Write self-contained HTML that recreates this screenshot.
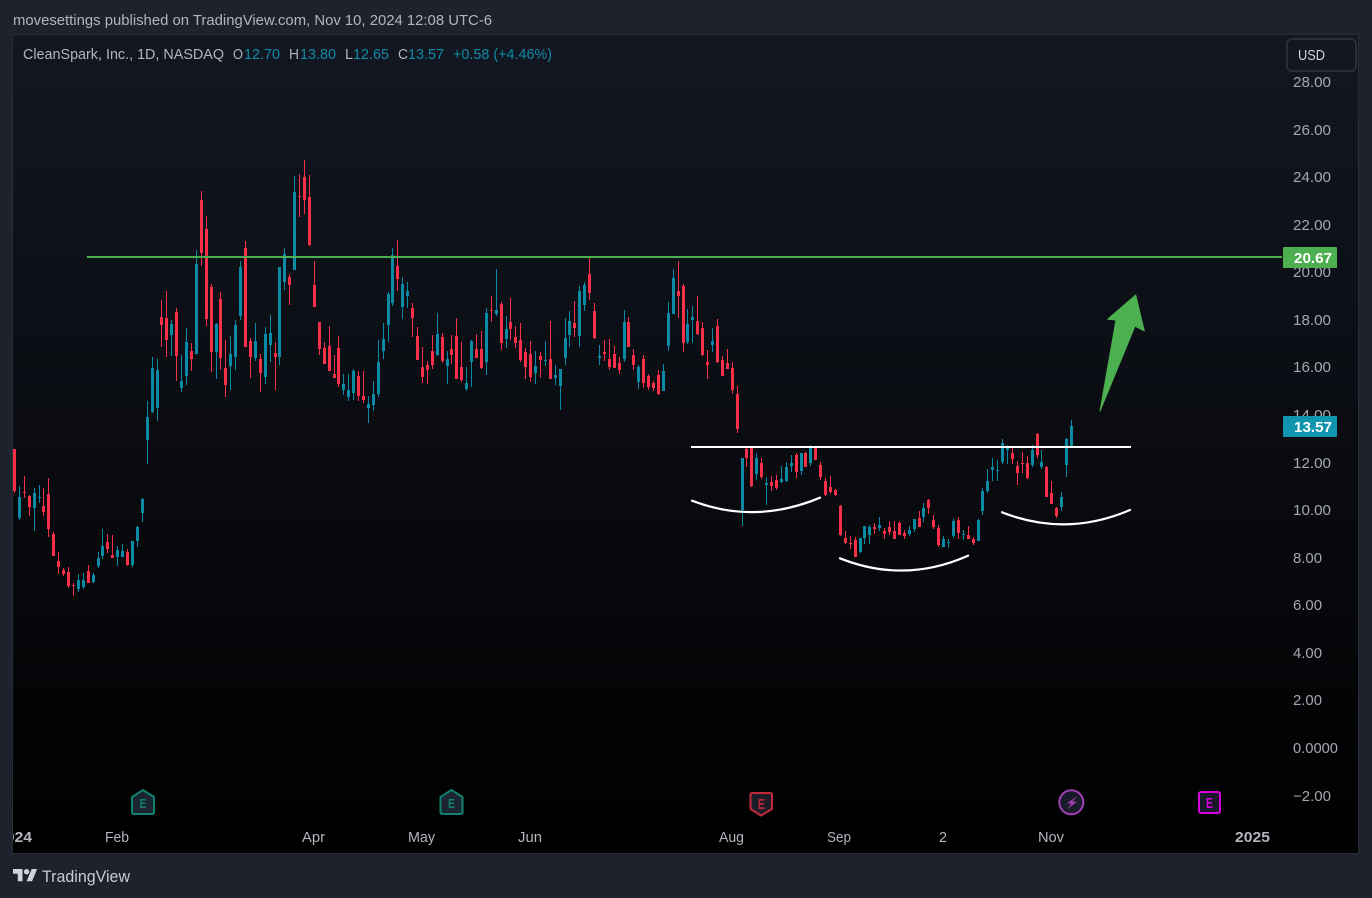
<!DOCTYPE html>
<html><head><meta charset="utf-8"><style>
html,body{margin:0;padding:0;width:1372px;height:898px;overflow:hidden;background:#1e222d}
svg{display:block}
text{font-family:"Liberation Sans",sans-serif;font-size:15px}
.y{fill:#a5a8b0}
.x{fill:#b2b5be}
.l{fill:#b2b5be}
.v{fill:#0f8ba6}
</style></head><body>
<svg width="1372" height="898" viewBox="0 0 1372 898" xmlns="http://www.w3.org/2000/svg">
<defs>
<linearGradient id="g" x1="0" y1="0" x2="0" y2="1"><stop offset="0" stop-color="#131722"/><stop offset="1" stop-color="#000"/></linearGradient>
<clipPath id="c"><rect x="13" y="35" width="1345" height="818"/></clipPath>
</defs>
<rect width="1372" height="898" fill="#1e222d"/>
<rect x="12.5" y="34.5" width="1346" height="819" fill="url(#g)" stroke="#2a2e39"/>
<text x="13" y="25" class="l" textLength="479" lengthAdjust="spacingAndGlyphs">movesettings published on TradingView.com, Nov 10, 2024 12:08 UTC-6</text>
<text x="23" y="59" class="l" textLength="201" lengthAdjust="spacingAndGlyphs">CleanSpark, Inc., 1D, NASDAQ</text>
<text x="233" y="59" class="l" textLength="10" lengthAdjust="spacingAndGlyphs">O</text><text x="244" y="59" class="v" textLength="36" lengthAdjust="spacingAndGlyphs">12.70</text>
<text x="289" y="59" class="l" textLength="10" lengthAdjust="spacingAndGlyphs">H</text><text x="300" y="59" class="v" textLength="36" lengthAdjust="spacingAndGlyphs">13.80</text>
<text x="345" y="59" class="l" textLength="8" lengthAdjust="spacingAndGlyphs">L</text><text x="353" y="59" class="v" textLength="36" lengthAdjust="spacingAndGlyphs">12.65</text>
<text x="398" y="59" class="l" textLength="10" lengthAdjust="spacingAndGlyphs">C</text><text x="408" y="59" class="v" textLength="36" lengthAdjust="spacingAndGlyphs">13.57</text>
<text x="453" y="59" class="v" textLength="99" lengthAdjust="spacingAndGlyphs">+0.58 (+4.46%)</text>

<g clip-path="url(#c)" fill="none">
<path stroke="#f7304a" stroke-width="1" d="M14.5 449V493M24.5 476V498M29.5 495V516M43.5 488V516M48.5 478V537M53.5 532V556M58.5 552V574M63.5 568V576M68.5 567V588M73.5 583V596M88.5 565V583M107.5 534V553M112.5 535V558M127.5 549V566M161.5 300V347M166.5 291V357M176.5 308V381M191.5 343V371M201.5 191V266M206.5 216V326M211.5 284V372M220.5 292V370M225.5 340V397M245.5 241V347M250.5 338V378M260.5 354V392M275.5 342V390M289.5 274V305M299.5 174V217M304.5 160V214M309.5 175V246M314.5 261V307M319.5 322V355M324.5 342V364M329.5 326V371M334.5 355V378M338.5 336V387M358.5 371V401M363.5 371V403M397.5 240V291M412.5 303V337M417.5 327V360M422.5 347V383M427.5 361V384M432.5 335V369M442.5 333V363M451.5 335V364M456.5 318V379M461.5 342V382M476.5 334V358M481.5 331V369M491.5 296V322M501.5 302V350M510.5 298V340M515.5 326V348M520.5 323V362M525.5 348V379M530.5 341V382M540.5 352V378M550.5 321V379M574.5 301V337M589.5 257V300M594.5 303V339M604.5 340V361M609.5 339V370M614.5 346V368M619.5 357V374M628.5 317V347M633.5 349V370M643.5 355V388M648.5 374V390M653.5 381V391M658.5 370V395M678.5 261V318M683.5 284V352M697.5 296V335M702.5 322V356M707.5 350V379M717.5 319V363M722.5 356V376M727.5 349V369M732.5 362V394M737.5 386V433M746.5 446V467M751.5 446V487M761.5 458V479M771.5 476V491M776.5 475V490M796.5 453V478M805.5 452V467M815.5 447V460M820.5 462V480M825.5 478V496M830.5 476V494M835.5 489V496M840.5 505V536M845.5 531V544M850.5 536V549M855.5 537V557M874.5 523V534M884.5 528V539M889.5 521V535M894.5 521V539M899.5 521V535M904.5 530V539M919.5 511V527M928.5 499V514M933.5 515V529M938.5 525V547M958.5 517V539M968.5 526V539M973.5 537V545M1012.5 448V464M1017.5 461V485M1022.5 452V473M1027.5 456V479M1037.5 433V458M1046.5 466V497M1051.5 481V504M1056.5 507V518"/>
<path stroke="#f7304a" stroke-width="3" d="M14.5 449V491M24.5 492V493M29.5 496V507M43.5 506V512M48.5 494V529M53.5 534V556M58.5 561V567M63.5 570V574M68.5 572V586M73.5 585V586M88.5 571V583M107.5 542V549M112.5 555V558M127.5 552V565M161.5 317V325M166.5 318V340M176.5 312V356M191.5 351V359M201.5 200V253M206.5 229V319M211.5 287V352M220.5 299V358M225.5 368V385M245.5 248V347M250.5 341V357M260.5 359V373M275.5 353V357M289.5 277V285M299.5 196V197M304.5 177V200M309.5 197V245M314.5 285V307M319.5 322V349M324.5 348V364M329.5 346V371M334.5 374V378M338.5 348V384M358.5 376V396M363.5 396V400M397.5 266V279M412.5 308V318M417.5 336V360M422.5 367V377M427.5 365V370M432.5 351V365M442.5 337V361M451.5 349V355M456.5 336V379M461.5 367V380M476.5 349V358M481.5 349V368M491.5 310V311M501.5 304V343M510.5 322V329M515.5 337V343M520.5 340V360M525.5 352V367M530.5 354V377M540.5 356V360M550.5 359V379M574.5 323V328M589.5 274V293M594.5 311V338M604.5 352V354M609.5 359V367M614.5 354V368M619.5 363V370M628.5 322V347M633.5 355V365M643.5 359V383M648.5 376V387M653.5 383V388M658.5 375V394M678.5 291V296M683.5 286V343M697.5 321V334M702.5 328V355M707.5 362V365M717.5 326V362M722.5 360V376M727.5 363V369M732.5 368V390M737.5 394V429M746.5 449V458M751.5 448V486M761.5 463V477M771.5 482V486M776.5 480V488M796.5 455V472M805.5 453V467M815.5 448V460M820.5 465V477M825.5 481V495M830.5 487V492M835.5 490V495M840.5 506V535M845.5 538V543M850.5 543V544M855.5 540V557M874.5 527V529M884.5 531V534M889.5 527V532M894.5 531V539M899.5 523V535M904.5 533V536M919.5 518V527M928.5 500V508M933.5 520V527M938.5 528V545M958.5 520V533M968.5 535V539M973.5 539V543M1012.5 453V459M1017.5 466V473M1022.5 463V464M1027.5 463V478M1037.5 434V455M1046.5 467V497M1051.5 493V504M1056.5 508V516"/>
<path stroke="#0b8aa6" stroke-width="1" d="M19.5 486V520M34.5 488V531M39.5 485V503M78.5 574V592M83.5 573V589M93.5 573V583M98.5 552V568M102.5 529V559M117.5 546V566M122.5 544V557M132.5 541V567M137.5 526V547M142.5 498V522M147.5 401V464M152.5 357V413M157.5 359V421M171.5 320V356M181.5 355V392M186.5 328V385M196.5 250V354M216.5 323V379M230.5 336V390M235.5 320V370M240.5 261V320M255.5 323V361M265.5 327V384M270.5 315V362M279.5 267V365M284.5 248V290M294.5 176V270M343.5 374V395M348.5 374V401M353.5 369V400M368.5 396V423M373.5 381V411M378.5 340V397M383.5 323V359M388.5 292V342M392.5 248V306M402.5 277V319M407.5 282V308M437.5 313V356M447.5 351V384M466.5 367V391M471.5 340V387M486.5 308V375M496.5 269V316M506.5 316V348M535.5 351V384M545.5 341V366M555.5 365V385M560.5 369V410M565.5 318V365M569.5 311V347M579.5 286V347M584.5 282V311M599.5 345V365M624.5 310V362M638.5 365V389M663.5 364V391M668.5 302V351M673.5 269V314M687.5 309V344M692.5 306V343M712.5 328V352M742.5 458V526M756.5 453V480M766.5 477V505M781.5 466V483M786.5 462V482M791.5 455V472M801.5 453V475M810.5 445V466M860.5 538V553M864.5 526V544M869.5 525V544M879.5 517V531M909.5 526V536M914.5 519V532M923.5 503V522M943.5 536V547M948.5 539V548M953.5 519V538M963.5 530V540M978.5 519V541M982.5 488V515M987.5 469V493M992.5 458V481M997.5 460V481M1002.5 439V464M1007.5 445V464M1032.5 445V467M1041.5 450V469M1061.5 492V511M1066.5 438V477M1071.5 420V448"/>
<path stroke="#0b8aa6" stroke-width="3" d="M19.5 497V518M34.5 493V508M39.5 497V498M78.5 580V589M83.5 580V587M93.5 575V582M98.5 558V566M102.5 546V556M117.5 550V557M122.5 551V557M132.5 541V565M137.5 527V541M142.5 499V513M147.5 417V440M152.5 368V412M157.5 370V408M171.5 324V335M181.5 381V388M186.5 342V376M196.5 264V354M216.5 324V352M230.5 354V366M235.5 325V357M240.5 267V316M255.5 341V358M265.5 334V377M270.5 333V345M279.5 267V357M284.5 254V282M294.5 192V270M343.5 384V390M348.5 390V397M353.5 371V393M368.5 404V408M373.5 394V405M378.5 362V394M383.5 339V351M388.5 294V325M392.5 255V303M402.5 284V307M407.5 291V296M437.5 334V355M447.5 359V366M466.5 383V389M471.5 341V362M486.5 313V362M496.5 310V314M506.5 329V339M535.5 366V373M545.5 360V361M555.5 375V378M560.5 369V386M565.5 338V358M569.5 321V335M579.5 291V336M584.5 285V305M599.5 356V358M624.5 322V359M638.5 367V382M663.5 371V391M668.5 313V346M673.5 278V314M687.5 324V342M692.5 317V320M712.5 341V345M742.5 458V510M756.5 458V474M766.5 483V485M781.5 479V482M786.5 467V481M791.5 463V466M801.5 453V471M810.5 448V463M860.5 538V552M864.5 526V538M869.5 527V535M879.5 525V528M909.5 530V534M914.5 519V529M923.5 508V517M943.5 539V547M948.5 542V543M953.5 521V536M963.5 534V535M978.5 520V541M982.5 491V511M987.5 481V491M992.5 467V470M997.5 470V471M1002.5 443V462M1007.5 447V450M1032.5 450V465M1041.5 462V467M1061.5 497V507M1066.5 439V465M1071.5 426V447"/>
</g>

<rect x="87" y="256" width="1195" height="2" fill="#4caf50"/>
<rect x="691" y="446" width="440" height="2" fill="#fff"/>
<g fill="none" stroke="#fff" stroke-width="2.2" stroke-linecap="round">
<path d="M692 500.7Q755 525 820 497.7"/>
<path d="M840 558.3Q904 584 968 555.7"/>
<path d="M1002 512.3Q1066 537.5 1130 510"/>
</g>
<polygon points="1135.7,295 1144.3,331 1135,326 1100,411 1116,320 1107.7,319.3" fill="#4caf50" stroke="#4caf50" stroke-width="1" stroke-linejoin="round"/>

<rect x="1287" y="39" width="69" height="32" rx="5" fill="#131722" stroke="#2a2e39" stroke-width="2"/>
<text x="1298" y="60" fill="#d1d4dc" textLength="27" lengthAdjust="spacingAndGlyphs">USD</text>

<g class="y">
<text x="1293" y="87" textLength="38" lengthAdjust="spacingAndGlyphs">28.00</text>
<text x="1293" y="135" textLength="38" lengthAdjust="spacingAndGlyphs">26.00</text>
<text x="1293" y="182" textLength="38" lengthAdjust="spacingAndGlyphs">24.00</text>
<text x="1293" y="230" textLength="38" lengthAdjust="spacingAndGlyphs">22.00</text>
<text x="1293" y="277" textLength="38" lengthAdjust="spacingAndGlyphs">20.00</text>
<text x="1293" y="325" textLength="38" lengthAdjust="spacingAndGlyphs">18.00</text>
<text x="1293" y="372" textLength="38" lengthAdjust="spacingAndGlyphs">16.00</text>
<text x="1293" y="420" textLength="38" lengthAdjust="spacingAndGlyphs">14.00</text>
<text x="1293" y="468" textLength="38" lengthAdjust="spacingAndGlyphs">12.00</text>
<text x="1293" y="515" textLength="38" lengthAdjust="spacingAndGlyphs">10.00</text>
<text x="1293" y="563" textLength="29" lengthAdjust="spacingAndGlyphs">8.00</text>
<text x="1293" y="610" textLength="29" lengthAdjust="spacingAndGlyphs">6.00</text>
<text x="1293" y="658" textLength="29" lengthAdjust="spacingAndGlyphs">4.00</text>
<text x="1293" y="705" textLength="29" lengthAdjust="spacingAndGlyphs">2.00</text>
<text x="1293" y="753" textLength="45" lengthAdjust="spacingAndGlyphs">0.0000</text>
<text x="1293" y="801" textLength="38" lengthAdjust="spacingAndGlyphs">−2.00</text>
</g>

<rect x="1283" y="247" width="54" height="21" rx="1" fill="#4caf50"/>
<text x="1294" y="263" fill="#fff" font-weight="bold" textLength="38" lengthAdjust="spacingAndGlyphs">20.67</text>
<rect x="1283" y="416" width="54" height="21" rx="1" fill="#0f95ad"/>
<text x="1294" y="432" fill="#fff" font-weight="bold" textLength="38" lengthAdjust="spacingAndGlyphs">13.57</text>

<g class="x">
<g clip-path="url(#c)"><text x="-3" y="842" font-weight="bold" textLength="35" lengthAdjust="spacingAndGlyphs">2024</text></g>
<text x="105" y="842" textLength="24" lengthAdjust="spacingAndGlyphs">Feb</text>
<text x="302" y="842" textLength="23" lengthAdjust="spacingAndGlyphs">Apr</text>
<text x="408" y="842" textLength="27" lengthAdjust="spacingAndGlyphs">May</text>
<text x="518" y="842" textLength="24" lengthAdjust="spacingAndGlyphs">Jun</text>
<text x="719" y="842" textLength="25" lengthAdjust="spacingAndGlyphs">Aug</text>
<text x="827" y="842" textLength="24" lengthAdjust="spacingAndGlyphs">Sep</text>
<text x="939" y="842" textLength="8" lengthAdjust="spacingAndGlyphs">2</text>
<text x="1038" y="842" textLength="26" lengthAdjust="spacingAndGlyphs">Nov</text>
<text x="1235" y="842" font-weight="bold" textLength="35" lengthAdjust="spacingAndGlyphs">2025</text>
</g>

<g stroke-width="2" stroke-linejoin="round">
<path d="M143 790L154 797V812Q154 814 152 814H134Q132 814 132 812V797Z" fill="#1b2430" stroke="#10806f"/>
<path d="M451.500 790L462.500 797V812Q462.500 814 460.500 814H442.500Q440.500 814 440.500 812V797Z" fill="#1b2430" stroke="#10806f"/>
<path d="M752 793H770.500Q772 793 772 795V809L761 815.500L750.500 809V795Q750.500 793 752 793Z" fill="#1c1b28" stroke="#c22a3c"/>
<circle cx="1071.300" cy="802.300" r="12" fill="#1a1b2a" stroke="#a040b5"/>
<rect x="1199" y="792" width="21" height="21" rx="2" fill="#18182a" stroke="#d800dc"/>
</g>
<path d="M1077.300 796L1066.700 803.500H1071.300L1067.500 809L1077 801.800H1072.300Z" fill="#a040b5"/>
<g font-weight="bold">
<text x="139.500" y="808" fill="#10806f" style="font-size:12.500px" textLength="7" lengthAdjust="spacingAndGlyphs">E</text>
<text x="448" y="808" fill="#10806f" style="font-size:12.500px" textLength="7" lengthAdjust="spacingAndGlyphs">E</text>
<text x="758" y="809" fill="#c22a3c" style="font-size:14.500px" textLength="7" lengthAdjust="spacingAndGlyphs">E</text>
<text x="1206" y="808" fill="#d800dc" style="font-size:14.500px" textLength="7" lengthAdjust="spacingAndGlyphs">E</text>
</g>

<g transform="translate(13 866.300) scale(.68)" fill="#d1d4dc"><path d="M14 22H7V11H0V4h14v18zM28 22h-8l7.500-18h8L28 22z"/><circle cx="20" cy="8" r="4"/></g>
<text x="42" y="882" fill="#c8cbd3" style="font-size:17px" textLength="88" lengthAdjust="spacingAndGlyphs">TradingView</text>
</svg>
</body></html>
